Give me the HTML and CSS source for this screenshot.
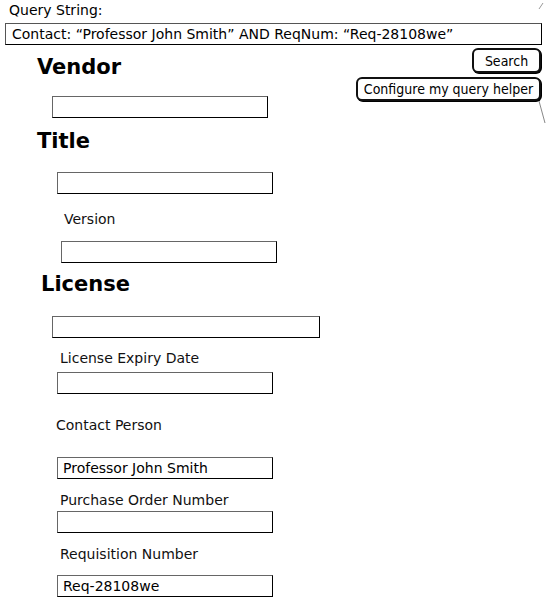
FILE: index.html
```html
<!DOCTYPE html>
<html lang="en">
<head>
<meta charset="utf-8">
<title>Query helper</title>
<link rel="stylesheet" href="styles.css">
</head>
<body>
<div class="page">
  <header class="query">
    <div class="query-label">Query String:</div>
    <div class="query-box">Contact: “Professor John Smith” AND ReqNum: “Req-28108we”</div>
    <svg class="corner-mark" width="6" height="8" viewBox="0 0 6 8"><path d="M1 7 L5 1" stroke="#999" stroke-width="1" fill="none"/></svg>
  </header>

  <div class="top-row">
    <div class="vendor-col">
      <h2 class="heading heading-vendor">Vendor</h2>
      <div class="field field-vendor"></div>
    </div>
    <div class="actions">
      <button class="sketch-btn btn-search">Search</button>
      <button class="sketch-btn btn-config">Configure my query helper</button>
      <svg class="tail" width="8" height="24" viewBox="0 0 8 24"><path d="M1 1 L7 23" stroke="#888" stroke-width="1" fill="none"/></svg>
    </div>
  </div>

  <h2 class="heading heading-title">Title</h2>
  <div class="field field-title"></div>

  <div class="label label-version">Version</div>
  <div class="field field-version"></div>

  <h2 class="heading heading-license">License</h2>
  <div class="field field-license"></div>

  <div class="label label-expiry">License Expiry Date</div>
  <div class="field field-expiry"></div>

  <div class="label label-contact">Contact Person</div>
  <div class="field field-contact">Professor John Smith</div>

  <div class="label label-po">Purchase Order Number</div>
  <div class="field field-po"></div>

  <div class="label label-req">Requisition Number</div>
  <div class="field field-req">Req-28108we</div>
</div>
</body>
</html>
```

FILE: styles.css
```css
* {
  box-sizing: border-box;
}

html, body {
  margin: 0;
  padding: 0;
  background: #ffffff;
}

body {
  font-family: "DejaVu Sans", "Liberation Sans", sans-serif;
  font-size: 14px;
  color: #000000;
  width: 546px;
  height: 598px;
  overflow: hidden;
}

.page {
  display: flex;
  flex-direction: column;
  align-items: flex-start;
}

/* Query string header */
.query {
  position: relative;
  align-self: stretch;
}

.query-label {
  margin: 2px 0 0 9px;
  height: 16px;
  line-height: 16px;
  font-size: 14px;
}

.query-box {
  margin: 5px 0 0 5px;
  width: 537px;
  height: 22px;
  border: 1px solid #000;
  border-top-color: #555;
  border-left-color: #555;
  padding-left: 6px;
  line-height: 20px;
  font-size: 14px;
  white-space: nowrap;
}

.corner-mark {
  position: absolute;
  top: 2px;
  right: 2px;
}

/* Top row: vendor + buttons */
.top-row {
  align-self: stretch;
  display: flex;
  justify-content: space-between;
  align-items: flex-start;
}

.vendor-col {
  display: flex;
  flex-direction: column;
  align-items: flex-start;
}

.actions {
  position: relative;
  display: flex;
  flex-direction: column;
  align-items: flex-end;
  padding-right: 5px;
}

.sketch-btn {
  font-family: "DejaVu Sans Condensed", "DejaVu Sans", sans-serif;
  font-stretch: condensed;
  font-size: 14px;
  color: #000;
  background: #fff;
  border: 2px solid #111;
  border-radius: 6px;
  box-shadow: 1px 1px 0 #000;
  padding: 0;
  display: flex;
  align-items: center;
  justify-content: center;
  line-height: 16px;
}

.btn-search {
  margin-top: 3px;
  width: 69px;
  height: 25px;
}

.btn-config {
  margin-top: 4px;
  width: 185px;
  height: 24px;
}

.tail {
  position: absolute;
  right: 0;
  top: 55px;
}

/* Headings */
.heading {
  margin: 0;
  font-size: 21px;
  font-weight: bold;
  line-height: 24px;
  height: 24px;
}

.heading-vendor {
  margin: 10px 0 0 37px;
}

.heading-title {
  margin: 11px 0 0 37px;
}

.heading-license {
  margin: 9px 0 0 41px;
}

/* Labels */
.label {
  font-size: 14px;
  line-height: 16px;
  height: 16px;
  color: #111;
}

.label-version { margin: 17px 0 0 64px; }
.label-expiry  { margin: 12px 0 0 60px; }
.label-contact { margin: 23px 0 0 56px; }
.label-po      { margin: 13px 0 0 60px; }
.label-req     { margin: 13px 0 0 60px; }

/* Fields */
.field {
  height: 22px;
  width: 216px;
  border: 1px solid #000;
  border-top-color: #666;
  border-left-color: #666;
  background: #fff;
  padding-left: 5px;
  line-height: 20px;
  font-size: 14px;
  white-space: nowrap;
}

.field-vendor  { margin: 17px 0 0 52px; }
.field-title   { margin: 19px 0 0 57px; }
.field-version { margin: 14px 0 0 61px; }
.field-license { margin: 20px 0 0 52px; width: 268px; }
.field-expiry  { margin: 6px 0 0 57px; }
.field-contact { margin: 24px 0 0 57px; }
.field-po      { margin: 3px 0 0 57px; }
.field-req     { margin: 13px 0 0 57px; }
```
